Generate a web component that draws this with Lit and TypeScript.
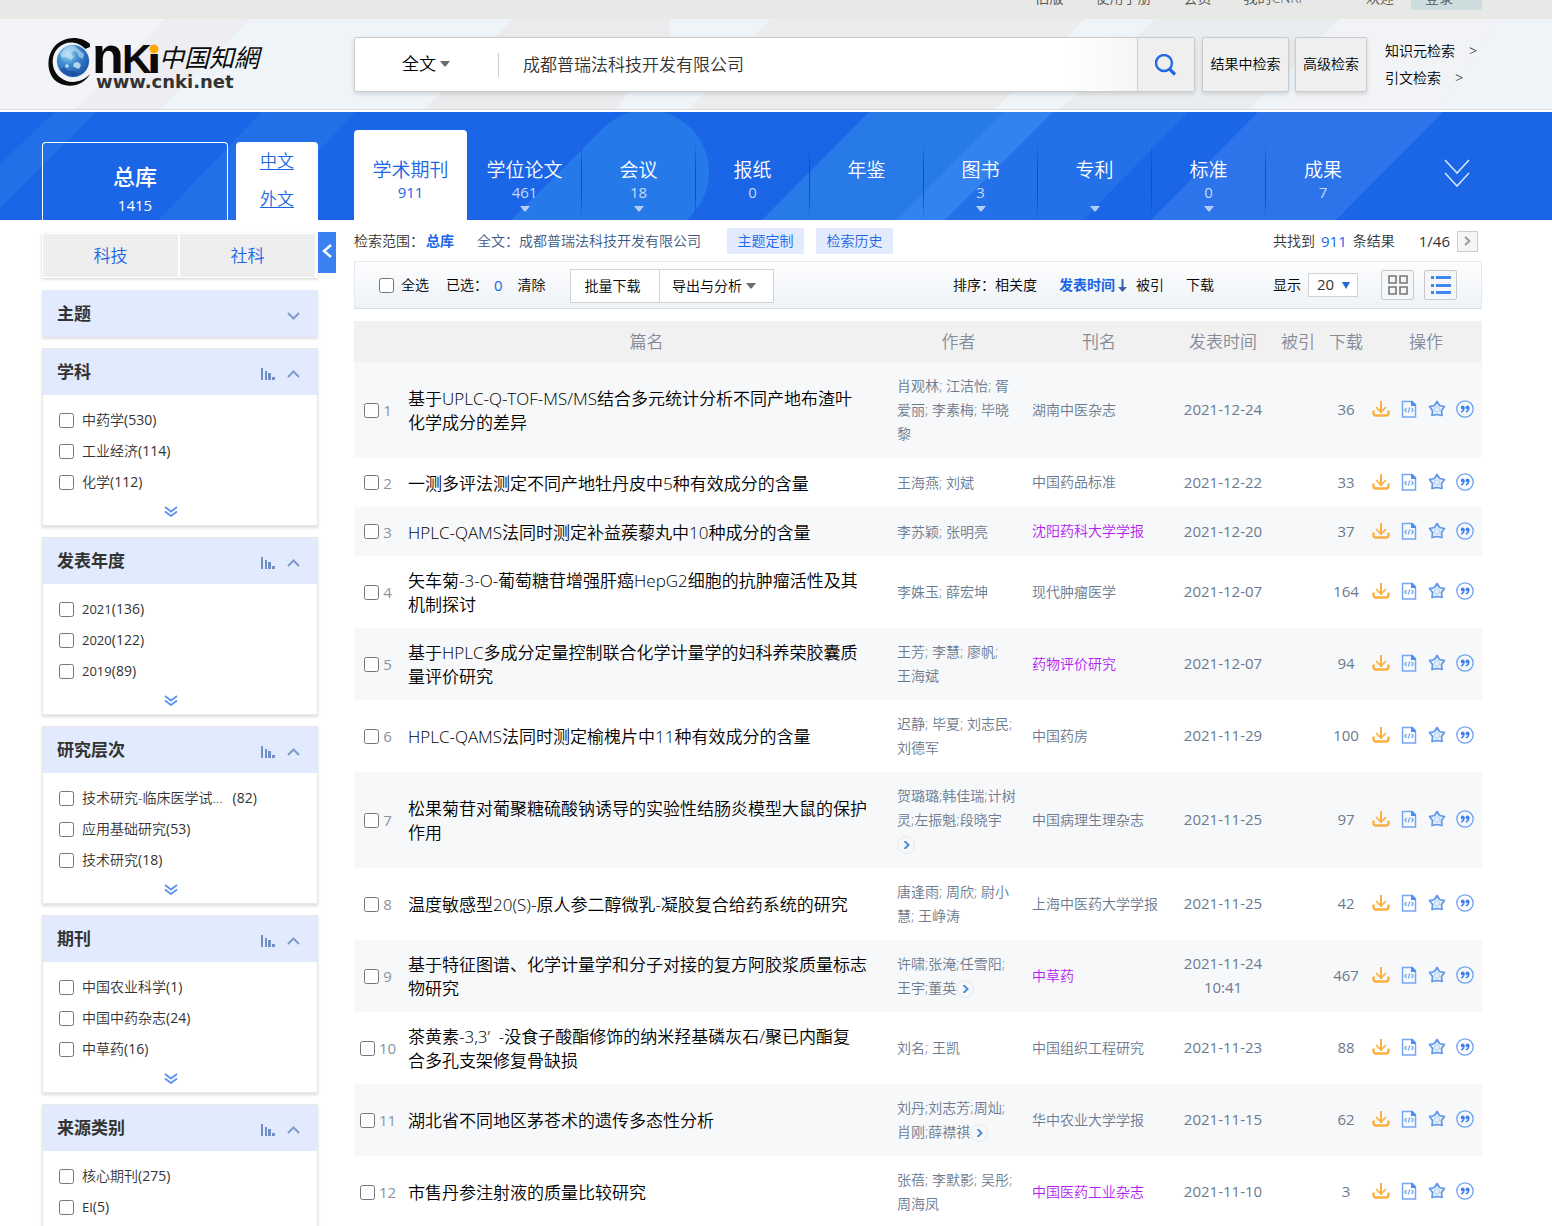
import { LitElement, html, css, svg, nothing } from "lit";
import { customElement, property } from "lit/decorators.js";
import { classMap } from "lit/directives/class-map.js";

interface Tab { name: string; count?: string; more?: boolean; active?: boolean; }
interface Facet { label: string; count: number; small?: boolean; gap?: boolean; }
interface Group { title: string; items: Facet[]; }
interface Paper { title: string; authors: string; more?: boolean; journal: string; hot?: boolean; date: string; downloads: number; }

const tabs: Tab[] = [
  { name: "学术期刊", count: "911", active: true },
  { name: "学位论文", count: "461", more: true },
  { name: "会议", count: "18", more: true },
  { name: "报纸", count: "0" },
  { name: "年鉴" },
  { name: "图书", count: "3", more: true },
  { name: "专利", more: true },
  { name: "标准", count: "0", more: true },
  { name: "成果", count: "7" },
];

const groups: Group[] = [
  { title: "学科", items: [{ label: "中药学", count: 530 }, { label: "工业经济", count: 114 }, { label: "化学", count: 112 }] },
  { title: "发表年度", items: [{ label: "2021", count: 136, small: true }, { label: "2020", count: 122, small: true }, { label: "2019", count: 89, small: true }] },
  { title: "研究层次", items: [{ label: "技术研究-临床医学试...", count: 82, gap: true }, { label: "应用基础研究", count: 53 }, { label: "技术研究", count: 18 }] },
  { title: "期刊", items: [{ label: "中国农业科学", count: 1 }, { label: "中国中药杂志", count: 24 }, { label: "中草药", count: 16 }] },
  { title: "来源类别", items: [{ label: "核心期刊", count: 275 }, { label: "EI", count: 5, small: true }] },
];

const papers: Paper[] = [
  { title: "基于UPLC-Q-TOF-MS/MS结合多元统计分析不同产地布渣叶\n化学成分的差异", authors: "肖观林; 江洁怡; 胥\n爱丽; 李素梅; 毕晓\n黎", journal: "湖南中医杂志", date: "2021-12-24", downloads: 36 },
  { title: "一测多评法测定不同产地牡丹皮中5种有效成分的含量", authors: "王海燕; 刘斌", journal: "中国药品标准", date: "2021-12-22", downloads: 33 },
  { title: "HPLC-QAMS法同时测定补益蒺藜丸中10种成分的含量", authors: "李苏颖; 张明亮", journal: "沈阳药科大学学报", hot: true, date: "2021-12-20", downloads: 37 },
  { title: "矢车菊-3-O-葡萄糖苷增强肝癌HepG2细胞的抗肿瘤活性及其\n机制探讨", authors: "李姝玉; 薛宏坤", journal: "现代肿瘤医学", date: "2021-12-07", downloads: 164 },
  { title: "基于HPLC多成分定量控制联合化学计量学的妇科养荣胶囊质\n量评价研究", authors: "王芳; 李慧; 廖帆;\n王海斌", journal: "药物评价研究", hot: true, date: "2021-12-07", downloads: 94 },
  { title: "HPLC-QAMS法同时测定榆槐片中11种有效成分的含量", authors: "迟静; 毕夏; 刘志民;\n刘德军", journal: "中国药房", date: "2021-11-29", downloads: 100 },
  { title: "松果菊苷对葡聚糖硫酸钠诱导的实验性结肠炎模型大鼠的保护\n作用", authors: "贺璐璐;韩佳瑞;计树\n灵;左振魁;段晓宇\n", more: true, journal: "中国病理生理杂志", date: "2021-11-25", downloads: 97 },
  { title: "温度敏感型20(S)-原人参二醇微乳-凝胶复合给药系统的研究", authors: "唐逢雨; 周欣; 尉小\n慧; 王峥涛", journal: "上海中医药大学学报", date: "2021-11-25", downloads: 42 },
  { title: "基于特征图谱、化学计量学和分子对接的复方阿胶浆质量标志\n物研究", authors: "许啸;张淹;任雪阳;\n王宇;董英", more: true, journal: "中草药", hot: true, date: "2021-11-24\n10:41", downloads: 467 },
  { title: "茶黄素-3,3’  -没食子酸酯修饰的纳米羟基磷灰石/聚已内酯复\n合多孔支架修复骨缺损", authors: "刘名; 王凯", journal: "中国组织工程研究", date: "2021-11-23", downloads: 88 },
  { title: "湖北省不同地区茅苍术的遗传多态性分析", authors: "刘丹;刘志芳;周灿;\n肖刚;薛襟祺", more: true, journal: "华中农业大学学报", date: "2021-11-15", downloads: 62 },
  { title: "市售丹参注射液的质量比较研究", authors: "张蓓; 李默影; 吴彤;\n周海凤", journal: "中国医药工业杂志", hot: true, date: "2021-11-10", downloads: 3 },
];

const base = css`
  * { box-sizing: border-box; }
  button, input, select { font: inherit; color: inherit; margin: 0; }
  button, select { cursor: pointer; }
  button { background: none; border: 0; padding: 0; }
  a { color: inherit; text-decoration: none; }
  svg { display: block; }
  input[type="checkbox"] { width: 15px; height: 15px; flex: none; }
`;

const caret = html`<svg class="caret" width="10" height="6" viewBox="0 0 10 6" aria-hidden="true"><path d="M0 0H10L6 5Q5 6 4 5Z" fill="currentColor"/></svg>`;

@customElement("site-logo")
class SiteLogo extends LitElement {
  static styles = css`
    :host { display: block; }
    svg { display: block; }
    .latin { font-family: "Liberation Sans", Arial, sans-serif; font-weight: 700; }
    .wide { font-family: "DejaVu Sans", sans-serif; font-weight: 700; }
    .han { font-family: "Noto Sans CJK TC", "Noto Sans CJK SC", sans-serif; font-style: italic; font-weight: 400; }
  `;
  render() {
    return html`<svg width="218" height="56" viewBox="0 0 218 56" role="img" aria-label="中国知网 CNKI">
      <defs>
        <radialGradient id="globe" cx=".35" cy=".3" r=".8">
          <stop offset="0" stop-color="#9fd4f2"/><stop offset=".4" stop-color="#3c8cd0"/><stop offset="1" stop-color="#1b4aa0"/>
        </radialGradient>
      </defs>
      <path d="M42 7C34-1 16-2 6 10C-3 21-1 40 11 46C22 52 36 48 42 37C35 45 22 48 13 41C3 34 2 19 10 11C17 4 29 3 37 12L42 10Z" fill="#0a0a0a"/>
      <circle cx="25" cy="24" r="17" fill="#dcebf5"/>
      <circle cx="25" cy="24" r="16" fill="url(#globe)"/>
      <path d="M17 11Q22 7 27 9L31 13L36 17L35 22L31 20L29 15L26 14L23 16L26 20L23 23L18 20L14 21L12 17Z" fill="#d5eef8" opacity=".55"/>
      <path d="M26 26L30 25L33 28L31 32L28 31L25 29ZM18 27L21 28L20 31L17 30Z" fill="#e2f3fa" opacity=".75"/>
      <path d="M12 33Q20 41 31 38L27 34L20 34L16 30Z" fill="#163f94" opacity=".5"/>
      <text class="latin" x="44" y="36" font-size="52" fill="#0a0a0a">n</text>
      <text class="latin" x="74" y="36" font-size="41" fill="#0a0a0a">K</text>
      <text class="wide" x="101" y="35" font-size="30" fill="#0a0a0a" stroke="#0a0a0a" stroke-width="2">ı</text>
      <circle cx="106" cy="12" r="4.500" fill="#ffa800"/>
      <text class="han" x="111" y="30" font-size="25" fill="#0a0a0a">中国知網</text>
      <text class="wide" x="48" y="51" font-size="18" fill="#333">www.cnki.net</text>
    </svg>`;
  }
}

@customElement("site-header")
class SiteHeader extends LitElement {
  static styles = [base, css`
    :host { display: block; }
    .top { height: 19px; overflow: hidden; background: #e8e8e6; color: #555; font-size: 14px; line-height: 24px; }
    .top nav { display: flex; justify-content: flex-end; margin-top: -14px; padding-right: 70px; }
    .top a { margin-right: 32px; }
    .top .space { margin-right: 64px; }
    .top .login { margin: 0; width: 71px; padding-left: 14px; background: #cddcdc; border-radius: 3px; }
    .top .hi { margin-right: 17px; }
    .head { position: relative; height: 91px; border-bottom: 1px solid #dcdcdc; background: #eff4f8; overflow: hidden; }
    .art { position: absolute; inset: 0; width: 100%; height: 100%; }
    .inner { position: relative; display: flex; align-items: flex-start; padding: 18px 70px 0 42px; }
    .logo { flex: none; width: 312px; padding-left: 6px; }
    .search { display: flex; flex: 1; min-width: 0; height: 55px; border: 1px solid #ccc; border-radius: 2px; background: linear-gradient(90deg, #fff 85%, #eee 100%); box-shadow: 0 2px 4px #0002; font-size: 17px; }
    .field { display: grid; align-items: center; flex: none; width: 143px; }
    .field > * { grid-area: 1 / 1; }
    .field select { appearance: none; border: 0; background: none; height: 100%; width: 100%; padding: 0 0 3px 47px; color: #000; outline: 0; }
    .field .caret { margin: 0 0 2px 85px; color: #6c6c6c; pointer-events: none; }
    .term { flex: 1; min-width: 0; display: flex; align-items: center; }
    .term::before { content: ""; width: 1px; height: 24px; background: #ccc; }
    .term input { flex: 1; min-width: 0; height: 100%; border: 0; background: none; padding: 0 0 3px 24px; color: #333; outline: 0; }
    .go { flex: none; display: grid; place-items: center; width: 57px; border-left: 1px solid #ccc; background: #efefef; }
    .box { flex: none; display: grid; place-items: center; height: 55px; padding-bottom: 2px; border: 1px solid #ccc; border-radius: 2px; background: #efefef; box-shadow: 0 2px 4px #0002; font-size: 14px; line-height: 20px; color: #000; }
    .within { width: 87px; margin-left: 7px; }
    .adv { width: 72px; margin-left: 6px; }
    .links { flex: none; width: 97px; margin-left: 18px; font-size: 14px; line-height: 27px; color: #000; }
    .links a { display: flex; gap: 14px; }
  `];
  render() {
    return html`
      <div class="top"><nav>
        <a href="#">旧版</a><a href="#">使用手册</a><a href="#">会员</a><a class="space" href="#">我的CNKI</a>
        <span class="hi">欢迎</span><a class="login" href="#">登录</a>
      </nav></div>
      <div class="head">
        <svg class="art" viewBox="0 0 1552 90" preserveAspectRatio="xMidYMid slice" aria-hidden="true">
          <path d="M0 0H170L80 90H0Z" fill="#f3f4f8"/>
          <path d="M165 0H250L160 90H75Z" fill="#eeedf1"/>
          <path d="M513 0H670V20L615 90H425Z" fill="#ebebee"/>
          <path d="M770 0H1085L995 90H690Z" fill="#ececed"/>
          <path d="M1155 0H1340L1250 90H1060Z" fill="#e9edef"/>
          <path d="M1340 0H1500L1440 90H1280Z" fill="#f2f3f7"/>
        </svg>
        <div class="inner">
          <a class="logo" href="#"><site-logo></site-logo></a>
          <div class="search">
            <div class="field"><select aria-label="检索项"><option>全文</option></select>${caret}</div>
            <div class="term"><input type="text" aria-label="检索词" value="成都普瑞法科技开发有限公司"></div>
            <button class="go" aria-label="检索"><svg width="22" height="22" viewBox="0 0 22 22"><circle cx="9" cy="9" r="8" fill="none" stroke="#2468e6" stroke-width="2.400"/><path d="M14.500 15L20 20.500" stroke="#2468e6" stroke-width="3.200"/></svg></button>
          </div>
          <button class="box within">结果中检索</button>
          <a class="box adv" href="#">高级检索</a>
          <div class="links"><a href="#">知识元检索 <span>&gt;</span></a><a href="#">引文检索 <span>&gt;</span></a></div>
        </div>
      </div>`;
  }
}

@customElement("library-bar")
class LibraryBar extends LitElement {
  static styles = [base, css`
    :host { display: block; padding-top: 2px; background: #fff; }
    .bar { position: relative; height: 108px; background: #1b66e6; overflow: hidden; color: #fff; }
    .art { position: absolute; inset: 0; width: 100%; height: 100%; }
    .inner { position: relative; display: flex; align-items: flex-end; height: 100%; padding: 0 70px 0 42px; }
    .all { flex: none; width: 186px; height: 78px; border: 1px solid #fff; border-bottom: 0; border-radius: 4px 4px 0 0; padding-top: 16px; font-size: 22px; line-height: 30px; font-weight: 500; }
    .all span { display: block; font-size: 15px; line-height: 28px; }
    .lang { flex: none; width: 82px; height: 78px; margin: 0 36px 0 8px; border-radius: 4px 4px 0 0; background: #fff; color: #1b66e6; font-size: 17px; line-height: 38px; text-align: center; }
    .lang a { display: block; text-decoration: underline; text-underline-offset: 2px; text-decoration-thickness: 1px; }
    .tabs { display: flex; flex: 1; min-width: 0; }
    .tab { flex: 0 1 114px; display: flex; flex-direction: column; align-items: center; height: 90px; padding-top: 28px; font-size: 19px; line-height: 24px; white-space: nowrap; border-right: 1px solid; border-image: linear-gradient(#0050e000 15%, #0550e0 40%, #0550e0 75%, #0050e000 98%) 1; }
    .tab:last-child { border-right: 0; border-image: none; }
    .tab.active { background: #fff; color: #1b66e6; border-image: none; border: 0; border-radius: 4px 4px 0 0; margin-right: 1px; flex-basis: 113px; }
    .count { height: 22px; font-size: 15px; line-height: 20px; font-weight: 400; color: #c5d9fa; }
    .active .count { color: inherit; }
    .caret { color: #b5cdf8; margin-top: 2px; }
    .more { flex: none; margin: 0 11px 32px 0; }
  `];
  render() {
    return html`<div class="bar">
      <svg class="art" viewBox="0 0 1552 108" preserveAspectRatio="xMidYMid slice" aria-hidden="true">
        <path d="M55 0H96L-12 108H-60Z" fill="#226fe8"/>
        <path d="M262 0H355L255 108H158Z" fill="#226fe8"/>
        <path d="M647 60L547 160" stroke="#2679e9" stroke-width="124" stroke-linecap="round"/>
        <path d="M869 0H1010L900 108H762Z" fill="#287ae9"/>
        <path d="M1003 0H1053L945 108H897Z" fill="#3383ee"/>
        <path d="M1053 0H1188L1083 108H945Z" fill="#2470e8"/>
        <path d="M1258 0H1443L1336 108H1151Z" fill="#2d74eb"/>
      </svg>
      <div class="inner">
        <button class="all">总库<span>1415</span></button>
        <div class="lang"><a href="#">中文</a><a href="#">外文</a></div>
        <div class="tabs">${tabs.map(t => html`
          <button class=${classMap({ tab: true, active: !!t.active })}>${t.name}<span class="count">${t.count ?? nothing}</span>${t.more ? caret : nothing}</button>`)}
        </div>
        <button class="more" aria-label="更多"><svg width="28" height="30" viewBox="0 0 28 30" fill="none" stroke="#d3e2fc" stroke-width="1.600"><path d="M2 2L14 15L26 2M2 15L14 28L26 15"/></svg></button>
      </div>
    </div>`;
  }
}

@customElement("facet-panel")
class FacetPanel extends LitElement {
  @property({ attribute: false }) group!: Group;
  static styles = [base, css`
    :host { display: block; border: 1px solid #e8e8e8; background: #fff; box-shadow: 0 2px 3px #0002; }
    .title { display: flex; align-items: center; height: 46px; padding: 0 17px 0 14px; background: #e1ebfd; }
    h3 { flex: 1; margin: 0; font-size: 17px; line-height: 24px; color: #333; }
    .title button { margin: 4px 0 0 12px; }
    ul { list-style: none; margin: 0; padding: 10px 16px 0; }
    li { height: 31px; padding-top: 5px; font-size: 14px; line-height: 20px; color: #333; }
    label { display: flex; gap: 8px; }
    input { margin-top: 3px; }
    .small { font-size: 13px; }
    .gap { margin-right: 10px; }
    .count { font-weight: 400; }
    .more { display: grid; place-items: center; width: 100%; height: 27px; padding-right: 19px; }
  `];
  render() {
    const g = this.group;
    return html`
      <div class="title"><h3>${g.title}</h3>
        <button aria-label="可视化"><svg width="14" height="12" viewBox="0 0 14 12" fill="#7290c4"><path d="M0 0H2V12H0ZM4 3H6V12H4ZM7 5H10V12H7ZM11 9H14V12H11Z"/></svg></button>
        <button aria-label="收起"><svg width="13" height="8" viewBox="0 0 13 8" fill="none" stroke="#7f9bcb" stroke-width="2"><path d="M1 7L6.500 1.500L12 7"/></svg></button>
      </div>
      <ul>${g.items.map(i => html`<li><label><input type="checkbox"><span><span class=${classMap({ small: !!i.small, count: !!i.small, gap: !!i.gap })}>${i.label}</span><span class="count">(${i.count})</span></span></label></li>`)}</ul>
      <button class="more" aria-label="展开更多"><svg width="14" height="11" viewBox="0 0 14 11" fill="none" stroke="#5b93f0" stroke-width="1.800"><path d="M1 1L7 5.500L13 1M1 5.500L7 10L13 5.500"/></svg></button>`;
  }
}

@customElement("side-filters")
class SideFilters extends LitElement {
  static styles = [base, css`
    :host { display: flex; flex-direction: column; }
    .kinds { display: grid; grid-template-columns: 1fr 1fr; gap: 2px; padding: 1px 3px 1px 1px; margin-bottom: 12px; box-shadow: 0 1px 3px #0003; }
    .kinds button { height: 43px; background: #eee; color: #1b66e6; font-size: 17px; line-height: 24px; }
    .topic { display: flex; align-items: center; justify-content: space-between; height: 47px; margin-bottom: 11px; padding: 0 18px 0 15px; background: #e1ebfd; box-shadow: 0 2px 3px #0002; }
    h3 { margin: 0; font-size: 17px; line-height: 24px; color: #333; }
    .topic button { margin-top: 4px; }
    .panels { display: flex; flex-direction: column; gap: 11px; }
  `];
  render() {
    return html`
      <div class="kinds"><button>科技</button><button>社科</button></div>
      <div class="topic"><h3>主题</h3><button aria-label="展开"><svg width="13" height="8" viewBox="0 0 13 8" fill="none" stroke="#7f9bcb" stroke-width="2"><path d="M1 1L6.500 6.500L12 1"/></svg></button></div>
      <div class="panels">${groups.map(g => html`<facet-panel .group=${g}></facet-panel>`)}</div>`;
  }
}

const opIcons = [
  ["下载", svg`<g fill="none" stroke="#fbae42" stroke-width="2.400"><path d="M9 1V13" stroke-width="2"/><path d="M4 7L9 12L14 7" stroke-width="1.700"/><path d="M1.500 10.500V13Q1.500 15.500 4 15.500H14Q16.500 15.500 16.500 13V10.500"/></g>`],
  ["HTML阅读", svg`<g fill="none" stroke="#74a7f2" stroke-width="1.500"><path d="M2.500 1.500H12L15.500 5V17H2.500Z"/><path d="M6.500 8L4.800 10L6.500 12M11.500 8L13.200 10L11.500 12M9.700 7.500L8.300 12.500" stroke-width="1.200"/></g><path d="M11 1H12.500L16 4.500V6H11Z" fill="#4f8eee"/>`],
  ["收藏", svg`<path d="M9 1.500L11.500 5.500L16.500 6.500L13.500 10.500L14 15.500L9 14.500L4 15.500L4.500 10.500L1.500 6.500L6.500 5.500Z" fill="#e5effc" stroke="#5f97e6" stroke-width="1.700" stroke-linejoin="round"/><circle cx="9" cy="9.500" r="2.500" fill="none" stroke="#9fc0f0" stroke-width="1.200" stroke-dasharray="1.200 1"/>`],
  ["引用", svg`<circle cx="9" cy="9" r="8.200" fill="none" stroke="#6ba0f0" stroke-width="1.300"/><g fill="#3f82ee"><circle cx="6.700" cy="7.400" r="1.900"/><circle cx="11.500" cy="7.400" r="1.900"/></g><path d="M7.900 7.500Q8.200 10.500 5.200 12M12.700 7.500Q13 10.500 10 12" fill="none" stroke="#3f82ee" stroke-width="1.500"/>`],
] as const;

@customElement("result-table")
class ResultTable extends LitElement {
  static styles = [base, css`
    :host { display: block; }
    table { width: 100%; table-layout: fixed; border-collapse: collapse; color: #6b7a90; font-size: 14px; line-height: 24px; }
    th { height: 41px; padding: 0; background: #f1f1f1; color: #848b99; font-size: 17px; font-weight: inherit; }
    td { height: 49px; padding: 11px 6px 12px; white-space: pre-line; vertical-align: middle; }
    tbody tr:nth-child(odd) { background: #f7f8fa; }
    .pick { width: 48px; }
    .who { width: 135px; }
    .src { width: 146px; }
    .when { width: 102px; }
    .num { width: 48px; }
    .ops { width: 112px; }
    td.pick, td.ops { padding: 0; }
    td.pick { font-size: 15px; color: #8a92a3; }
    td.pick label { display: flex; align-items: center; justify-content: center; gap: 4px; }
    td.title { padding: 13px 6px 11px; font-size: 17px; color: #000; }
    td.title a, td.who { white-space: pre; }
    td.who { padding: 12px 6px; }
    td.when, td.num { padding: 11px 0 13px; text-align: center; font-size: 15px; }
    td.when, td.num, td.pick { font-weight: 400; }
    td.when { white-space: pre; }
    td.src { white-space: nowrap; }
    .hot { color: #b31df0; }
    .actions { display: flex; gap: 10px; padding: 0 0 2px 2px; }
    .next { display: inline-grid; place-items: center; width: 18px; height: 18px; border: 1px solid #e8e8e8; border-radius: 50%; vertical-align: middle; background: #f8f8f8; }
  `];
  render() {
    return html`<table>
      <thead><tr><th class="pick"></th><th>篇名</th><th class="who">作者</th><th class="src">刊名</th><th class="when">发表时间</th><th class="num">被引</th><th class="num">下载</th><th class="ops">操作</th></tr></thead>
      <tbody>${papers.map((p, i) => html`<tr>
        <td class="pick"><label><input type="checkbox">${i + 1}</label></td>
        <td class="title"><a href="#">${p.title}</a></td>
        <td class="who">${p.authors}${p.more ? html`<button class="next" aria-label="更多作者"><svg width="7" height="8" viewBox="0 0 7 8" fill="none" stroke="#4590d8" stroke-width="2"><path d="M1.500 0L5.500 4L1.500 8"/></svg></button>` : nothing}</td>
        <td class="src"><a class=${classMap({ hot: !!p.hot })} href="#">${p.journal}</a></td>
        <td class="when">${p.date}</td>
        <td class="num"></td>
        <td class="num">${p.downloads}</td>
        <td class="ops"><div class="actions">${opIcons.map(([name, art]) => html`<button aria-label=${name}><svg width="18" height="18" viewBox="0 0 18 18">${art}</svg></button>`)}</div></td>
      </tr>`)}</tbody>
    </table>`;
  }
}

@customElement("result-tools")
class ResultTools extends LitElement {
  static styles = [base, css`
    :host { display: block; font-size: 14px; line-height: 24px; white-space: nowrap; color: #000; }
    .scope { display: flex; align-items: center; height: 26px; margin: 8px 0 7px; padding-right: 4px; color: #333; }
    .scope b { margin-left: 2px; color: #1b66e6; }
    .query { margin: 0 26px 0 23px; color: #3d5785; }
    .chip { width: 77px; height: 26px; margin-right: 12px; background: #e1ebfd; color: #1b66e6; }
    .found { margin-left: auto; }
    .blue { margin: 0 6px; color: #1b66e6; font-size: 15px; font-weight: 400; }
    .page { margin: 0 7px 0 24px; font-size: 15px; font-weight: 400; }
    .nextpage { display: grid; place-items: center; width: 21px; height: 21px; border: 1px solid #ccc; background: #f5f5f5; }
    .bar { display: flex; align-items: center; height: 48px; margin-bottom: 12px; padding: 0 24px; border: 1px solid #e6eaee; border-bottom-color: #d3dde6; background: linear-gradient(#fcfdfe, #eff3f7); }
    .all { display: flex; align-items: center; gap: 7px; margin-right: 17px; }
    .clear { margin-left: 9px; }
    .batch { display: flex; height: 34px; margin: 1px 0 0 24px; }
    .batch button { display: flex; align-items: center; justify-content: center; gap: 4px; width: 90px; padding-right: 4px; border: 1px solid #d2d2d2; background: #fff; color: #000; }
    .batch button + button { width: 115px; margin-left: -1px; }
    .caret { color: #6c6c6c; }
    .sort { display: flex; align-items: center; margin-left: auto; }
    .sort b { color: #1b66e6; margin-left: 22px; }
    .sort svg { margin: 0 9px 0 3px; }
    .sort .dl { margin: 0 59px 0 22px; }
    .size { display: grid; align-items: center; width: 50px; height: 24px; margin: 0 23px 0 7px; border: 1px solid #d2d2d2; background: #fff; }
    .size > * { grid-area: 1 / 1; }
    .size select { appearance: none; width: 100%; height: 22px; border: 0; background: none; padding: 0 0 2px 8px; font-size: 15px; font-weight: 400; line-height: 20px; color: #333; outline: 0; }
    .size svg { margin-left: 33px; pointer-events: none; }
    .view { display: grid; place-items: center; width: 33px; height: 30px; margin-right: 10px; border: 1px solid #c8c8c8; border-radius: 2px; background: #f5f6f8; }
    .view:last-child { margin-right: 0; }
  `];
  render() {
    return html`
      <div class="scope">
        <span>检索范围：</span><b>总库</b>
        <span class="query">全文：成都普瑞法科技开发有限公司</span>
        <button class="chip">主题定制</button><button class="chip">检索历史</button>
        <span class="found">共找到</span><span class="blue">911</span><span>条结果</span>
        <span class="page">1/46</span>
        <button class="nextpage" aria-label="下一页"><svg width="7" height="10" viewBox="0 0 7 10" fill="none" stroke="#999" stroke-width="1.800"><path d="M1 1L5.500 5L1 9"/></svg></button>
      </div>
      <div class="bar">
        <label class="all"><input type="checkbox">全选</label>
        <span>已选：</span><span class="blue">0</span><button class="clear">清除</button>
        <div class="batch"><button>批量下载</button><button>导出与分析${caret}</button></div>
        <div class="sort">
          <span>排序：</span><a href="#">相关度</a><b>发表时间</b>
          <svg width="9" height="13" viewBox="0 0 9 13" aria-hidden="true"><path d="M3.500 0H5.500V8H9L4.500 13L0 8H3.500Z" fill="#3a62ae"/></svg>
          <a href="#">被引</a><a class="dl" href="#">下载</a>
        </div>
        <label for="size">显示</label>
        <div class="size"><select id="size"><option>20</option></select><svg width="8" height="7" viewBox="0 0 8 7" aria-hidden="true"><path d="M0 0H8L4 7Z" fill="#2468c8"/></svg></div>
        <button class="view" aria-label="详情模式"><svg width="20" height="20" viewBox="0 0 20 20" fill="none" stroke="#777" stroke-width="1.600"><path d="M1 1H8V8H1ZM12 1H19V8H12ZM1 12H8V19H1ZM12 12H19V19H12Z"/></svg></button>
        <button class="view" aria-label="列表模式"><svg width="20" height="20" viewBox="0 0 20 20" fill="#3f87f5"><path d="M0 1H3V4H0ZM5 1H20V4H5ZM0 9H3V12H0ZM5 9H20V12H5ZM0 16H3V19H0ZM5 16H20V19H5Z"/></svg></button>
      </div>`;
  }
}

@customElement("app-root")
class AppRoot extends LitElement {
  static styles = [base, css`
    :host { display: block; height: 100vh; overflow: hidden; background: #fff; font-family: "Open Sans", "Noto Sans", "Noto Sans CJK SC", sans-serif; font-weight: 350; }
    .body { display: flex; align-items: flex-start; padding: 0 70px 0 42px; }
    side-filters { flex: none; width: 276px; margin-top: 13px; }
    .fold { flex: none; display: grid; place-items: center; width: 18px; height: 41px; margin: 12px 18px 0 0; padding-bottom: 4px; background: #3b82f0; }
    main { flex: 1; min-width: 0; }
  `];
  render() {
    return html`
      <site-header></site-header>
      <library-bar></library-bar>
      <div class="body">
        <side-filters></side-filters>
        <button class="fold" aria-label="收起侧栏"><svg width="10" height="14" viewBox="0 0 10 14" fill="none" stroke="#fff" stroke-width="2.400"><path d="M9 1L2 7L9 13"/></svg></button>
        <main><result-tools></result-tools><result-table></result-table></main>
      </div>`;
  }
}
